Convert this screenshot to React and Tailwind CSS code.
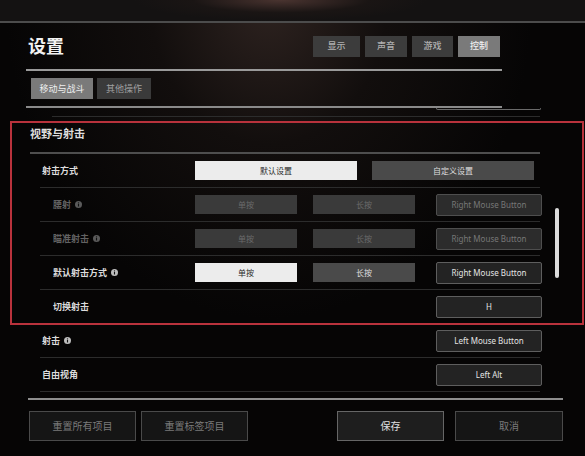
import React from 'react'

const font = "font-['Noto_Sans','Noto_Sans_CJK_SC',sans-serif]"

const tabs = [
  { label: '显示', w: 'w-[47px]' },
  { label: '声音', w: 'w-[42px]' },
  { label: '游戏', w: 'w-[41px]' },
  { label: '控制', w: 'w-[42px]', active: true },
]

function Info({ dim }) {
  return (
    <svg width="7" height="7" viewBox="0 0 10 10" className="ml-[4px]">
      <circle cx="5" cy="5" r="5" fill={dim ? '#5a5a5a' : '#bdbdbd'} />
      <rect x="4.2" y="4.2" width="1.6" height="3.6" fill="#111" />
      <rect x="4.2" y="2" width="1.6" height="1.4" fill="#111" />
    </svg>
  )
}

function Choice({ children, kind, wide }) {
  const styles = {
    on: 'bg-[#ececec] text-[#2a2a2a]',
    off: 'bg-[#4a4a4a] text-[#dedede]',
    dim: 'bg-[#3a3a3a] text-[#6a6a6a]',
  }
  return (
    <div
      className={`flex h-[19px] shrink-0 items-center justify-center text-[8px] ${
        wide ? 'w-[162px]' : 'w-[102px]'
      } ${styles[kind]}`}
    >
      {children}
    </div>
  )
}

function KeyBtn({ children, dim }) {
  return (
    <div
      className={`flex h-[22px] w-[106px] shrink-0 items-center justify-center rounded-[2px] border text-[8px] ${
        dim
          ? 'border-[#4e4e4e] bg-[#2c2c2c] text-[#777]'
          : 'border-[#5e5e5e] bg-[#232323] text-[#e4e4e4]'
      }`}
    >
      {children}
    </div>
  )
}

function Row({ label, sub, dim, info, children, keyBtn, keyDim, sep = true }) {
  return (
    <div
      className={`ml-[40px] flex h-[34px] w-[500px] items-center ${
        sep ? 'border-b border-[#2c2c2c]' : ''
      }`}
    >
      <div
        className={`flex w-[155px] shrink-0 items-center text-[9px] font-bold ${
          sub ? 'pl-[13px]' : 'pl-[2px]'
        } ${dim ? 'text-[#626262]' : 'text-[#dcdcdc]'}`}
      >
        {label}
        {info && <Info dim={dim} />}
      </div>
      <div className="flex w-[241px] shrink-0 items-center">{children}</div>
      {keyBtn && <KeyBtn dim={keyDim}>{keyBtn}</KeyBtn>}
    </div>
  )
}

export default function App() {
  return (
    <div
      className={`relative h-[456px] w-[585px] overflow-hidden bg-[#070606] bg-[radial-gradient(ellipse_45%_70%_at_46%_0%,#2e2320_0%,#120e0d_45%,#060505_100%)] ${font}`}
    >
      {/* top band */}
      <div className="h-[21px] bg-[radial-gradient(ellipse_25%_100%_at_48%_0%,#4a3430_0%,#1a1514_60%,#141212_100%)]" />
      <div className="h-[2px] bg-[#4c4c4c]" />

      {/* header */}
      <div className="flex h-[46px] items-center justify-between pl-[28px] pr-[85px]">
        <div className="text-[18px] font-bold leading-none text-[#f2f2f2]">设置</div>
        <div className="flex gap-[5px]">
          {tabs.map((t) => (
            <div
              key={t.label}
              className={`flex h-[21px] items-center justify-center text-[9px] font-medium ${t.w} ${
                t.active ? 'bg-[#7a7a7a] text-[#f0f0f0]' : 'bg-[#3c3c3c] text-[#b0b0b0]'
              }`}
            >
              {t.label}
            </div>
          ))}
        </div>
      </div>
      <div className="ml-[26px] h-[2px] w-[476px] bg-[#9a9a9a]" />

      {/* sub tabs */}
      <div className="flex h-[35px] items-center gap-[4px] pl-[31px]">
        <div className="flex h-[21px] w-[62px] items-center justify-center bg-[#7a7a7a] text-[9px] text-[#f0f0f0]">
          移动与战斗
        </div>
        <div className="flex h-[21px] w-[54px] items-center justify-center bg-[#3a3a3a] text-[9px] text-[#a0a0a0]">
          其他操作
        </div>
      </div>
      <div className="ml-[26px] h-[2px] w-[476px] bg-[#8a8a8a]" />

      {/* list */}
      <div className="relative h-[290px] overflow-hidden">
        <div className="h-[8px]">
          <div className="ml-[436px] h-[2px] w-[105px] rounded-b-[2px] border-x border-b border-[#6a6a6a]" />
        </div>
        <div className="ml-[52px] h-px w-[488px] bg-[#2c2c2c]" />

        <div className="relative">
          <div className="flex h-[35px] items-center pl-[30px] text-[11px] font-bold text-[#dedede]">
            视野与射击
          </div>
          <div className="ml-[30px] h-[2px] w-[510px] bg-[#4e4e4e]" />

          <Row label="射击方式">
            <Choice kind="on" wide>默认设置</Choice>
            <div className="ml-[15px] shrink-0">
              <Choice kind="off" wide>自定义设置</Choice>
            </div>
          </Row>
          <Row label="腰射" sub dim info keyBtn="Right Mouse Button" keyDim>
            <Choice kind="dim">单按</Choice>
            <div className="ml-[16px]">
              <Choice kind="dim">长按</Choice>
            </div>
          </Row>
          <Row label="瞄准射击" sub dim info keyBtn="Right Mouse Button" keyDim>
            <Choice kind="dim">单按</Choice>
            <div className="ml-[16px]">
              <Choice kind="dim">长按</Choice>
            </div>
          </Row>
          <Row label="默认射击方式" sub info keyBtn="Right Mouse Button">
            <Choice kind="on">单按</Choice>
            <div className="ml-[16px]">
              <Choice kind="off">长按</Choice>
            </div>
          </Row>
          <Row label="切换射击" sub keyBtn="H" />

          {/* highlight frame */}
          <div className="pointer-events-none absolute bottom-[-1px] left-[10px] right-[1px] top-[4px] border-2 border-[#b8323c]" />
        </div>

        <Row label="射击" info keyBtn="Left Mouse Button" />
        <Row label="自由视角" keyBtn="Left Alt" />

        {/* scrollbar */}
        <div className="absolute left-[555px] top-[100px] h-[70px] w-[4px] rounded-full bg-[#dcdcdc]" />
      </div>

      <div className="ml-[28px] h-[2px] w-[535px] bg-[#8e8e8e]" />

      {/* footer */}
      <div className="flex items-center pl-[29px] pt-[11px]">
        <div className="flex h-[30px] w-[107px] items-center justify-center border border-[#4a4a4a] bg-[#151515] text-[10px] text-[#7a7a7a]">
          重置所有项目
        </div>
        <div className="ml-[5px] flex h-[30px] w-[107px] items-center justify-center border border-[#4a4a4a] bg-[#151515] text-[10px] text-[#7a7a7a]">
          重置标签项目
        </div>
        <div className="ml-[89px] flex h-[30px] w-[107px] items-center justify-center border border-[#666] bg-[#1e1e1e] text-[10px] text-[#e0e0e0]">
          保存
        </div>
        <div className="ml-[11px] flex h-[30px] w-[108px] items-center justify-center border border-[#4a4a4a] bg-[#151515] text-[10px] text-[#7a7a7a]">
          取消
        </div>
      </div>
    </div>
  )
}
